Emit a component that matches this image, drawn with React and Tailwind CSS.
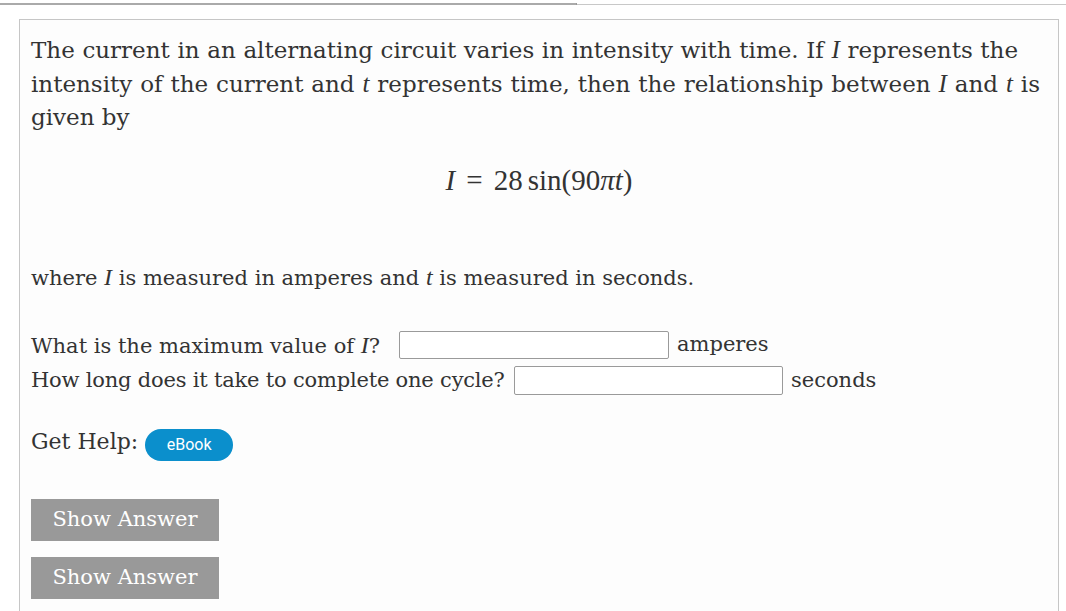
export default function App() {
  const serif = { fontFamily: '"DejaVu Serif", serif' };
  const math = { fontFamily: '"Liberation Serif", "Times New Roman", serif' };
  const Var = ({ children, size = 'text-[25px]' }) => (
    <span className={`italic ${size}`} style={math}>{children}</span>
  );

  return (
    <div className="h-[611px] w-[1066px] overflow-hidden bg-white text-[#333]" style={serif}>
      <div className="flex h-[19px] items-start">
        <div className="mt-[3px] h-[2px] w-[577px] border-r border-[#999] bg-[#aaa]" />
        <div className="mt-[4px] h-px flex-1 bg-[#c8c8c8]" />
      </div>
      <div className="ml-[19px] mr-[7px] h-[600px] border border-[#c6c6c6] bg-[#fdfdfd] px-[11px] pt-[13px]">
        <p className="text-[23px] leading-[33px]">
          <span className="block w-[987px] [text-align-last:justify]">
            The current in an alternating circuit varies in intensity with time. If <Var>I</Var> represents the
          </span>
          <span className="block w-[1009px] [text-align-last:justify]">
            intensity of the current and <Var>t</Var> represents time, then the relationship between <Var>I</Var> and <Var>t</Var> is
          </span>
          <span className="block">given by</span>
        </p>
        <div className="mt-[26px] flex justify-center text-[29px] leading-[40px]" style={math}>
          <span>
            <i>I</i>
            <span className="mx-[11px]">=</span>
            28<span className="ml-[5px]">sin(90</span><i>πt</i>)
          </span>
        </div>
        <p className="mt-[61px] text-[21px] leading-[32px]">
          where <Var size="text-[24px]">I</Var> is measured in amperes and <Var size="text-[24px]">t</Var> is measured in seconds.
        </p>
        <div className="mt-[37px] flex h-[28px] items-center text-[21px]">
          <span className="w-[368px] shrink-0">What is the maximum value of <Var size="text-[24px]">I</Var>?</span>
          <span className="h-[28px] w-[270px] rounded-[2px] border border-[#9a9a9a] bg-white" />
          <span className="ml-[8px]">amperes</span>
        </div>
        <div className="mt-[7px] flex h-[29px] items-center text-[21px]">
          <span className="w-[483px] shrink-0 tracking-[-0.2px]">How long does it take to complete one cycle?</span>
          <span className="h-[29px] w-[269px] rounded-[2px] border border-[#9a9a9a] bg-white" />
          <span className="ml-[8px]">seconds</span>
        </div>
        <div className="mt-[34px] flex h-[32px] items-center gap-[7px]">
          <span className="pb-[8px] text-[22px]">Get Help:</span>
          <span
            className="flex h-[32px] w-[88px] items-center justify-center rounded-full bg-[#0b8fcc] text-[16px] text-white"
            style={{ fontFamily: 'Roboto, "Liberation Sans", sans-serif' }}
          >
            eBook
          </span>
        </div>
        <div className="mt-[38px] flex h-[42px] w-[188px] items-center justify-center bg-[#999] text-[21px] text-white">
          Show Answer
        </div>
        <div className="mt-[16px] flex h-[42px] w-[188px] items-center justify-center bg-[#999] text-[21px] text-white">
          Show Answer
        </div>
      </div>
    </div>
  );
}
